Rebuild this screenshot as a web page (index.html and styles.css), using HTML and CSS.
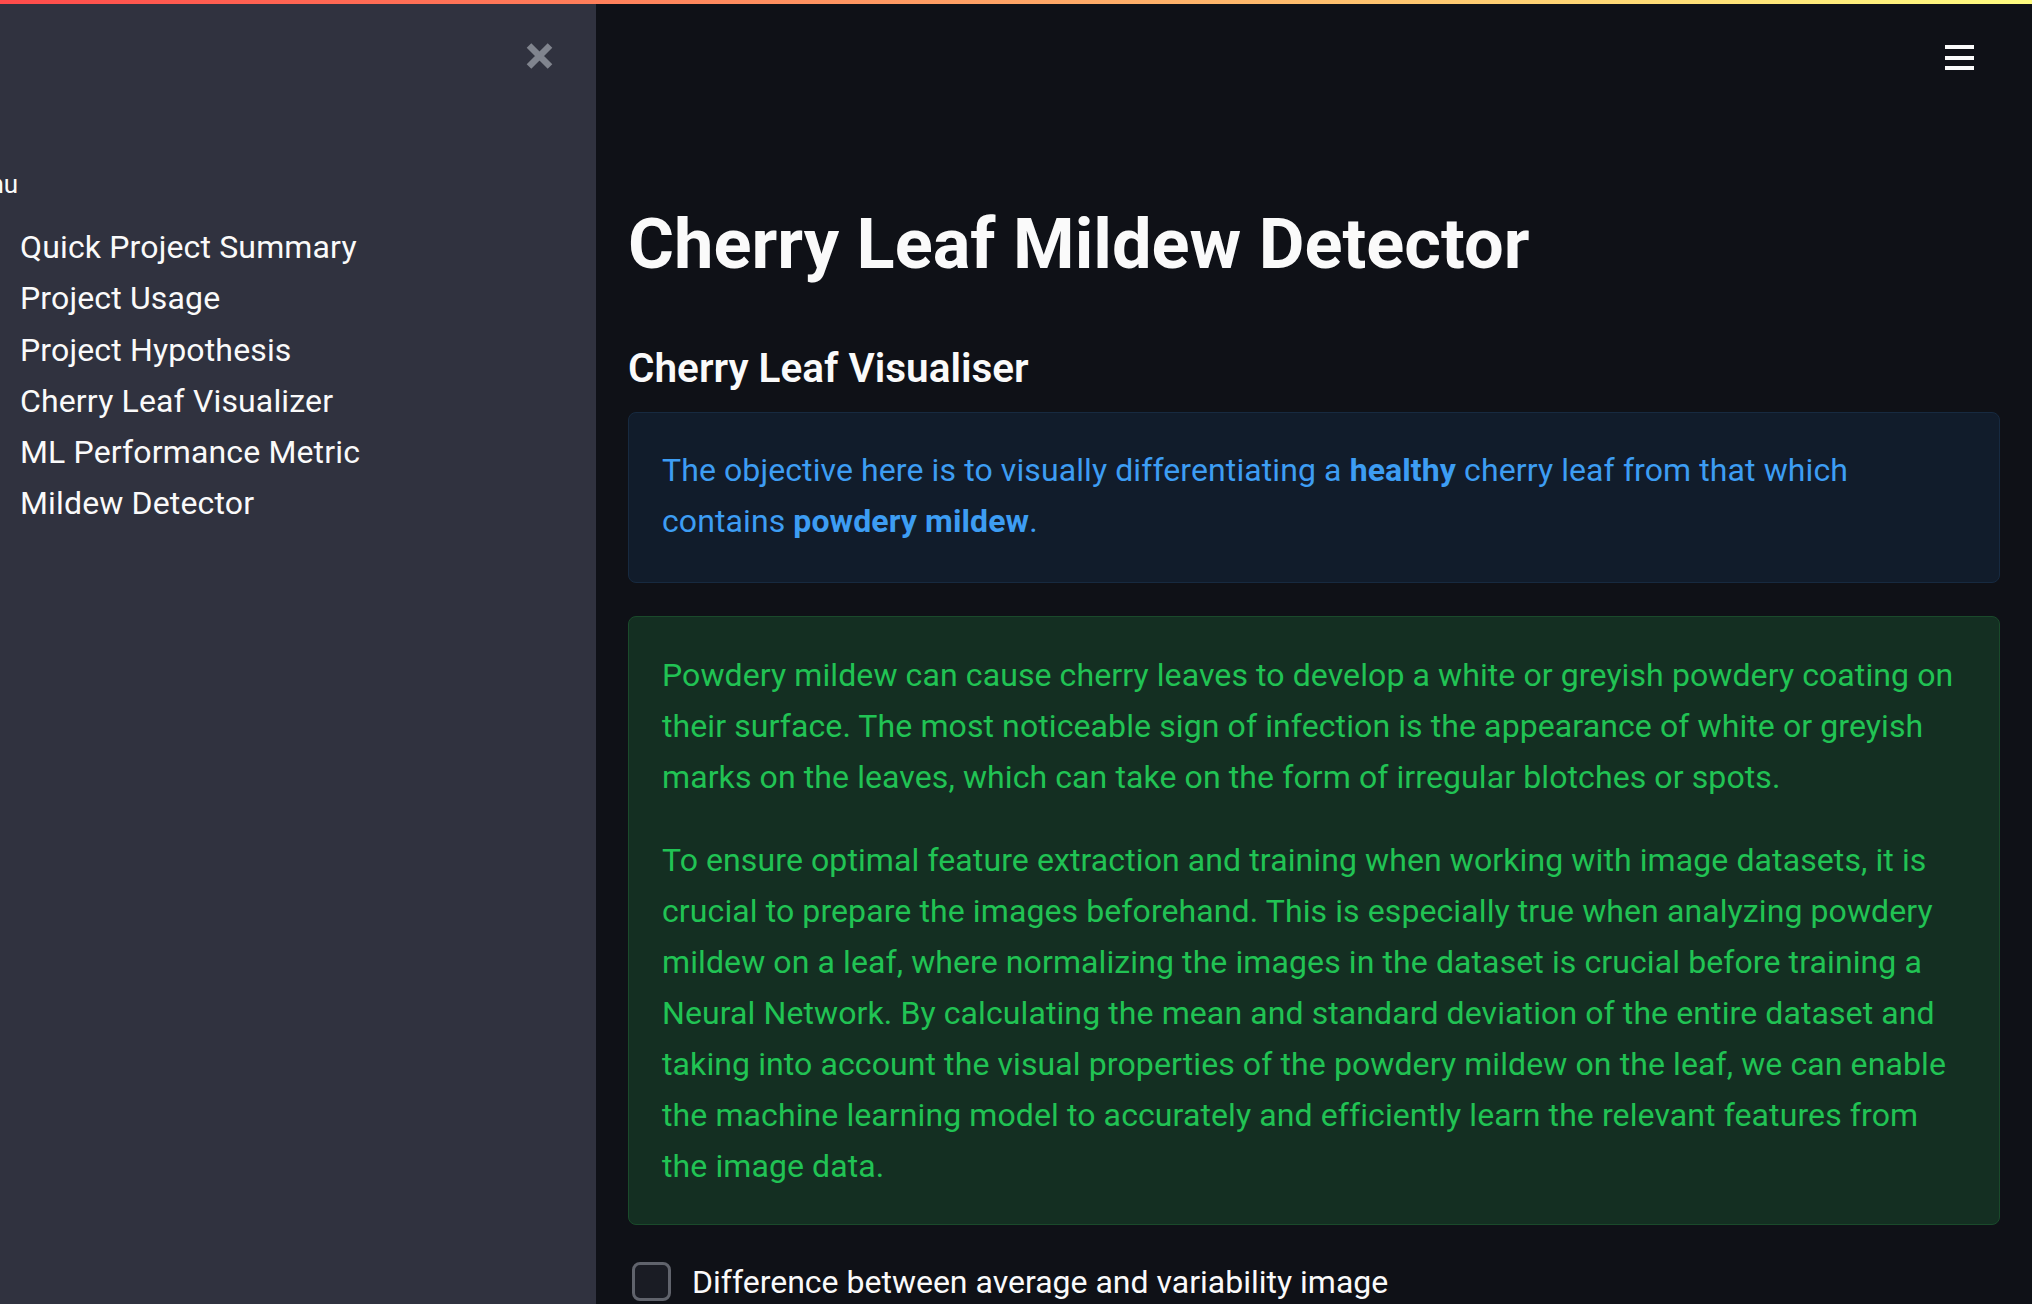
FILE: index.html
```html
<!DOCTYPE html>
<html lang="en">
<head>
<meta charset="utf-8">
<title>Cherry Leaf Mildew Detector</title>
<link rel="stylesheet" href="styles.css">
</head>
<body>
<div class="decoration"></div>
<div class="app">
  <aside class="sidebar">
    <button class="close-btn" aria-label="Close sidebar">
      <svg width="27" height="28" viewBox="0 0 27 28"><path d="M3 3.5 L24 24.5 M24 3.5 L3 24.5" stroke="#80848e" stroke-width="6.5" stroke-linecap="butt" fill="none"/></svg>
    </button>
    <div class="menu-label">Menu</div>
    <ul class="nav">
      <li>Quick Project Summary</li>
      <li>Project Usage</li>
      <li>Project Hypothesis</li>
      <li>Cherry Leaf Visualizer</li>
      <li>ML Performance Metric</li>
      <li>Mildew Detector</li>
    </ul>
  </aside>
  <main class="main">
    <header class="toolbar">
      <svg class="hamburger" width="29" height="25" viewBox="0 0 29 25"><rect x="0" y="0" width="29" height="4" fill="#fafafa"/><rect x="0" y="11" width="29" height="4" fill="#fafafa"/><rect x="0" y="21" width="29" height="4" fill="#fafafa"/></svg>
    </header>
    <section class="content">
      <h1 class="title">Cherry Leaf Mildew Detector</h1>
      <h3 class="subheader">Cherry Leaf Visualiser</h3>
      <div class="alert alert-info">
        <p>The objective here is to visually differentiating a <strong>healthy</strong> cherry leaf from that which contains <strong>powdery mildew</strong>.</p>
      </div>
      <div class="alert alert-success">
        <p>Powdery mildew can cause cherry leaves to develop a white or greyish powdery coating on their surface. The most noticeable sign of infection is the appearance of white or greyish marks on the leaves, which can take on the form of irregular blotches or spots.</p>
        <p>To ensure optimal feature extraction and training when working with image datasets, it is crucial to prepare the images beforehand. This is especially true when analyzing powdery mildew on a leaf, where normalizing the images in the dataset is crucial before training a Neural Network. By calculating the mean and standard deviation of the entire dataset and taking into account the visual properties of the powdery mildew on the leaf, we can enable the machine learning model to accurately and efficiently learn the relevant features from the image data.</p>
      </div>
      <label class="checkbox">
        <span class="box"></span>
        <span class="check-label">Difference between average and variability image</span>
      </label>
    </section>
  </main>
</div>
</body>
</html>
```
FILE: styles.css
```css
* { box-sizing: border-box; }
html, body { margin: 0; padding: 0; }
body {
  background: #0f1117;
  color: #fafafa;
  font-family: Roboto, "Liberation Sans", sans-serif;
  overflow: hidden;
  height: 1304px;
}
.decoration {
  position: fixed;
  top: 0; left: 0; right: 0;
  height: 4px;
  background: linear-gradient(90deg, #ff4b4b, #fffd80);
  z-index: 10;
}
.app {
  display: flex;
  height: 1304px;
}
.sidebar {
  width: 596px;
  flex: 0 0 596px;
  background: #30323f;
  display: flex;
  flex-direction: column;
  overflow: hidden;
}
.close-btn {
  align-self: flex-end;
  margin: 42px 43px 0 0;
  padding: 0;
  border: none;
  background: none;
  width: 27px;
  height: 28px;
  line-height: 0;
}
.menu-label {
  margin-top: 94px;
  margin-left: -47px;
  font-size: 26px;
  line-height: 40px;
  color: #fafafa;
}
.nav {
  list-style: none;
  margin: 18px 0 0 0;
  padding: 0 0 0 20px;
}
.nav li {
  font-size: 32px;
  line-height: 51.3px;
  letter-spacing: 0.15px;
  color: #fafafa;
  white-space: nowrap;
}
.main {
  flex: 1;
  display: flex;
  flex-direction: column;
  min-width: 0;
  overflow: hidden;
}
.toolbar {
  height: 100px;
  flex: 0 0 100px;
  display: flex;
  justify-content: flex-end;
  align-items: flex-start;
  padding: 45px 58px 0 0;
}
.content {
  flex: 0 0 auto;
  padding: 0 32px;
  display: flex;
  flex-direction: column;
}
.title {
  margin: 102px 0 0 0;
  font-size: 70.4px;
  font-weight: 700;
  line-height: 84.5px;
  color: #fafafa;
}
.subheader {
  margin: 57px 0 0 0;
  font-size: 40.5px;
  font-weight: 600;
  line-height: 48px;
  color: #fafafa;
}
.alert {
  border-radius: 8px;
  padding: 33px 37px 32px 33px;
  font-size: 32px;
  line-height: 51px;
  letter-spacing: 0.1px;
}
.alert p { margin: 0 0 32px 0; }
.alert p:last-child { margin-bottom: 0; }
.alert strong { font-weight: 700; }
.alert-info {
  margin-top: 20px;
  background: #111c2b;
  border: 1px solid #172a40;
  color: #3d9df3;
  padding-top: 32px;
  padding-bottom: 35px;
}
.alert-success {
  margin-top: 33px;
  background: #142f22;
  border: 1px solid #1a4a2b;
  color: #21c354;
  padding-top: 33.5px;
}
.checkbox {
  margin-top: 32px;
  display: flex;
  align-items: flex-start;
  gap: 21px;
  padding-left: 4px;
}
.box {
  margin-top: 5px;
  width: 39px;
  height: 39px;
  flex: 0 0 39px;
  border: 3px solid #60636c;
  border-radius: 8px;
  background: #1a1c24;
}
.check-label {
  font-size: 32px;
  line-height: 51px;
  color: #fafafa;
}
```
